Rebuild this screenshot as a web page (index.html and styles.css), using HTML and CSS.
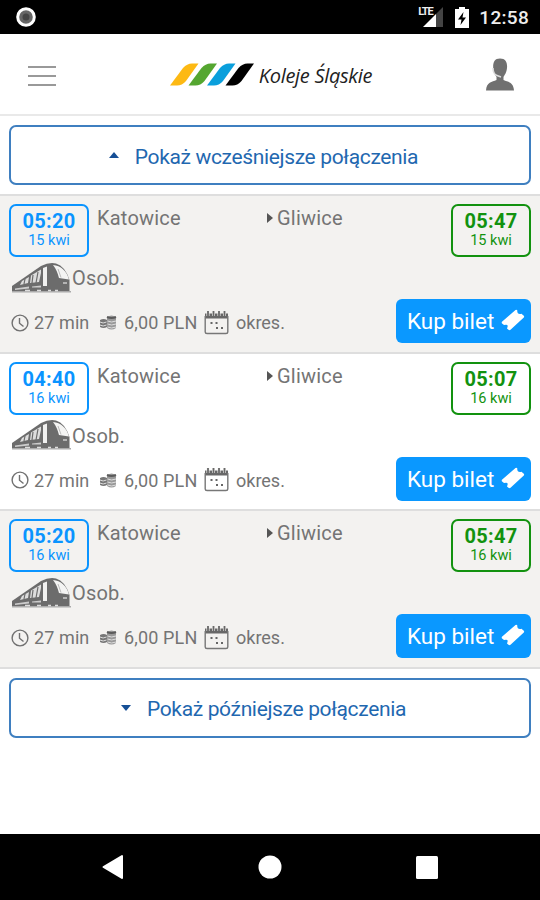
FILE: index.html
```html
<!DOCTYPE html>
<html lang="pl">
<head>
    <meta charset="UTF-8">
    <meta name="viewport" content="width=device-width, initial-scale=1.0">
    <title>Koleje Śląskie</title>
    <link rel="stylesheet" href="styles.css">
</head>
<body>
    <svg class="sprite">
        <symbol id="train" viewBox="0 0 59 31">
            <path d="M0 27 V23 L29 3 Q37 -1 44 .5 Q53 3 57.500 17 V28 H0Z" fill="#6c6c6c"/>
            <path d="M41 2 Q53 3 57 16.500 L47 15 Q45 7 41 2Z" fill="#f4f4f3"/>
            <path d="M31 5 L35 3.500 V23 H31Z" fill="#f1f1f0"/>
            <path d="M19 12.500 L29 6.500 V10 L27 19 L18 20Z M10 18 L17 14 L16 20 L8 22Z" fill="#ddd"/>
            <path d="M26 9 L24 20 M21 12 L20 20 M13 16 L12 21" stroke="#6c6c6c" stroke-width="1.200"/>
            <path d="M3 25.500 L17 23.500 V25.500 L3 27Z M20 23.500 L29 22.500 V24.500 H20Z" fill="#ccc"/>
            <path d="M46 6 L49 14.500" stroke="#bbb" fill="none"/>
            <path d="M51 20 h4" stroke="#ccc" stroke-width="1.500"/>
            <path d="M0 28.800 H59" stroke="#aaa" stroke-width="1.500"/>
            <path d="M13 27.500 h5 M25 27.500 h4 M36 27.500 h3 M43 27.500 h3" stroke="#ddd" stroke-width="1.500"/>
        </symbol>
        <symbol id="clock" viewBox="0 0 18 18">
            <circle cx="9" cy="9" r="7.900" fill="none" stroke="#707070" stroke-width="1.400"/>
            <path d="M8.500 4 V9.200 L12.500 12.500" fill="none" stroke="#707070" stroke-width="1.400"/>
        </symbol>
        <symbol id="coins" viewBox="0 0 18 15">
            <path d="M8 2 Q12.500 -1 17 2 V13 Q12.500 16 8 13Z" fill="#999"/>
            <path d="M1 5 Q4.500 3 8 5 V12 Q4.500 14 1 12Z" fill="#777"/>
            <path d="M8 2 Q12.500 4 17 2" stroke="#5b5b5b" stroke-width="2" fill="none"/>
            <path d="M8.500 6 Q12.500 8 17 6 M8.500 9 Q12.500 11 17 9 M8.500 12 Q12.500 14 17 12 M1 7 Q4 9 7.500 7 M1 10 Q4 12 7.500 10" stroke="#ddd" fill="none"/>
        </symbol>
        <symbol id="calendar" viewBox="0 0 25 24">
            <path d="M1 2.500 H24 V7.500 H1Z" fill="#686868"/>
            <path d="M1.200 5 V21 Q1.200 22.500 3 22.500 H22 Q23.800 22.500 23.800 21 V5" fill="none" stroke="#777" stroke-width="1.400"/>
            <path d="M4 0 V5 M9.500 0 V5 M15 0 V5 M20.500 0 V5" stroke="#f2f1ef" stroke-width="3"/>
            <path d="M4 0 V5 M9.500 0 V5 M15 0 V5 M20.500 0 V5" stroke="#686868" stroke-width="1.800"/>
            <path d="M6.500 12 h2 M11.500 12 h2 M12 17 h2 M17 17 h2" stroke="#666" stroke-width="1.800"/>
        </symbol>
        <symbol id="ticket" viewBox="0 0 24 24">
            <path d="M.7 14 L14.500 2 Q15.500 1.200 16.300 2.200 Q15.800 6.800 20.500 5.800 L22.800 7.800 Q23.500 8.600 22.800 9.400 L9.500 21.700 Q8.500 22.500 7.500 21.800 L6 20.500 Q8.300 15.500 3 17 L.8 15.300Z" fill="#fff"/>
        </symbol>
    </svg>

    <div class="status-bar">
        <svg class="record" viewBox="0 0 20 20">
            <circle cx="10" cy="10" r="8.300" fill="#666" stroke="#fff" stroke-width="3"/>
            <circle cx="10" cy="10" r="3.500" fill="#444"/>
        </svg>
        <div class="signal">
            <span class="lte">LTE</span>
            <svg width="20" height="20" viewBox="0 0 20 20">
                <path d="M20 0 V20 H13 V7Z" fill="#444"/>
                <path d="M13 7 V20 H0Z" fill="#fff"/>
            </svg>
        </div>
        <svg class="battery" viewBox="0 0 14 21">
            <path d="M4 0 H10 V2 H14 V21 H0 V2 H4Z" fill="#fff"/>
            <path d="M8.500 5 L3 12.500 H6.500 L5.500 18 L11 10.500 H7.500Z" fill="#000"/>
        </svg>
        <span class="clock">12:58</span>
    </div>

    <header class="header">
        <div class="menu"><span></span><span></span><span></span></div>
        <div class="logo">
            <svg width="84" height="23" viewBox="0 0 84 23">
                <path d="M0 22.500 L13 5 Q17 .5 22 .5 H28.500 L16 18 Q12 22.500 7 22.500Z" fill="#fdb913"/>
                <path d="M18.500 22.500 L31.500 5 Q35.500 .5 40.500 .5 H47 L34.500 18 Q30.500 22.500 25.500 22.500Z" fill="#55a630"/>
                <path d="M37 22.500 L50 5 Q54 .5 59 .5 H65.500 L53 18 Q49 22.500 44 22.500Z" fill="#0a9fdc"/>
                <path d="M55.500 22.500 L68.500 5 Q72.500 .5 77.500 .5 H84 L71.500 18 Q67.500 22.500 62.500 22.500Z" fill="#000"/>
            </svg>
            <span>Koleje Śląskie</span>
        </div>
        <svg class="user" viewBox="0 0 28 33">
            <path d="M14 .5 C20 .5 21.500 5 21 10 C20.500 15 18.500 17 17.500 19 V22 C22 24 27.500 24 28 32.500 H0 C.5 24 6 24 10.500 22 V19 C9 17 7.500 14 7.200 10 C7 4 8.500 .5 14 .5Z" fill="#707070"/>
            <path d="M7 10 Q7 16 11 17.500 L15 19" fill="none" stroke="#ddd" stroke-width="1.500"/>
        </svg>
    </header>

    <main>
        <button class="load-more earlier"><svg width="10" height="6"><path d="M0 6 L5 0 L10 6Z"/></svg><span>Pokaż wcześniejsze połączenia</span></button>

        <div class="connection">
            <div class="route">
                <div class="time departure"><b>05:20</b><span>15 kwi</span></div>
                <div class="station from">Katowice</div>
                <svg class="arrow" width="6" height="10"><path d="M0 0 L6 5 L0 10Z"/></svg>
                <div class="station">Gliwice</div>
                <div class="time arrival"><b>05:47</b><span>15 kwi</span></div>
            </div>
            <div class="train"><svg><use href="#train"/></svg>Osob.</div>
            <div class="info">
                <svg class="icon-clock"><use href="#clock"/></svg><span class="duration">27 min</span>
                <svg class="icon-coins"><use href="#coins"/></svg><span class="price">6,00 PLN</span>
                <svg class="icon-calendar"><use href="#calendar"/></svg><span class="period">okres.</span>
                <button class="buy">Kup bilet<svg><use href="#ticket"/></svg></button>
            </div>
        </div>

        <div class="connection">
            <div class="route">
                <div class="time departure"><b>04:40</b><span>16 kwi</span></div>
                <div class="station from">Katowice</div>
                <svg class="arrow" width="6" height="10"><path d="M0 0 L6 5 L0 10Z"/></svg>
                <div class="station">Gliwice</div>
                <div class="time arrival"><b>05:07</b><span>16 kwi</span></div>
            </div>
            <div class="train"><svg><use href="#train"/></svg>Osob.</div>
            <div class="info">
                <svg class="icon-clock"><use href="#clock"/></svg><span class="duration">27 min</span>
                <svg class="icon-coins"><use href="#coins"/></svg><span class="price">6,00 PLN</span>
                <svg class="icon-calendar"><use href="#calendar"/></svg><span class="period">okres.</span>
                <button class="buy">Kup bilet<svg><use href="#ticket"/></svg></button>
            </div>
        </div>

        <div class="connection">
            <div class="route">
                <div class="time departure"><b>05:20</b><span>16 kwi</span></div>
                <div class="station from">Katowice</div>
                <svg class="arrow" width="6" height="10"><path d="M0 0 L6 5 L0 10Z"/></svg>
                <div class="station">Gliwice</div>
                <div class="time arrival"><b>05:47</b><span>16 kwi</span></div>
            </div>
            <div class="train"><svg><use href="#train"/></svg>Osob.</div>
            <div class="info">
                <svg class="icon-clock"><use href="#clock"/></svg><span class="duration">27 min</span>
                <svg class="icon-coins"><use href="#coins"/></svg><span class="price">6,00 PLN</span>
                <svg class="icon-calendar"><use href="#calendar"/></svg><span class="period">okres.</span>
                <button class="buy">Kup bilet<svg><use href="#ticket"/></svg></button>
            </div>
        </div>

        <button class="load-more later"><svg width="10" height="6"><path d="M0 0 L5 6 L10 0Z"/></svg><span>Pokaż późniejsze połączenia</span></button>
    </main>

    <nav class="nav-bar">
        <svg width="22" height="26" viewBox="0 0 22 26"><path d="M1.500 13 L20 2 V24Z" fill="#fff" stroke="#fff" stroke-width="2" stroke-linejoin="round"/></svg>
        <svg width="24" height="24"><circle cx="12" cy="12" r="11.500" fill="#fff"/></svg>
        <svg width="22" height="23"><rect width="22" height="23" rx="1.500" fill="#fff"/></svg>
    </nav>
</body>
</html>
```

FILE: styles.css
```css
:root {
    --blue: #0a94ff;
    --dark-blue: #1f68b0;
    --green: #12920f;
    --grey: #747474;
    --line: #dedede;
}

* {
    box-sizing: border-box;
    margin: 0;
    padding: 0;
}

body {
    width: 540px;
    height: 900px;
    display: flex;
    flex-direction: column;
    background: #fff;
    color: var(--grey);
    font-family: Roboto, sans-serif;
    overflow: hidden;
}

svg {
    display: block;
    flex: none;
}

button {
    font-family: inherit;
}

.sprite {
    display: none;
}

.status-bar {
    flex: none;
    height: 34px;
    padding: 0 11px 0 16px;
    display: flex;
    align-items: center;
    background: #000;
    color: #eee;
}

.record {
    width: 20px;
    height: 20px;
}

.signal {
    position: relative;
    margin-left: auto;
    margin-right: 12px;
}

.lte {
    position: absolute;
    left: -5px;
    top: -1px;
    font-size: 11px;
    font-weight: bold;
    line-height: 11px;
    letter-spacing: -1.2px;
}

.battery {
    width: 14px;
    height: 21px;
    margin-right: 10px;
}

.clock {
    font-size: 19px;
    font-weight: 500;
    letter-spacing: 0.3px;
    line-height: 34px;
    padding-top: 2px;
}

.header {
    flex: none;
    height: 82px;
    padding: 0 26px 0 28px;
    display: flex;
    align-items: center;
    justify-content: space-between;
    border-bottom: 2px solid #e9e9e9;
}

.menu {
    width: 28px;
    display: flex;
    flex-direction: column;
    gap: 7px;
    padding-top: 3px;
}

.menu span {
    height: 2px;
    background: #999;
}

.logo {
    display: flex;
    align-items: center;
    gap: 5px;
}

.logo span {
    padding-top: 2px;
    font-family: "Open Sans", sans-serif;
    font-style: italic;
    font-size: 20px;
    letter-spacing: -0.3px;
    color: #222;
}

.user {
    width: 28px;
    height: 33px;
}

main {
    flex: 1;
    padding-top: 9px;
}

.load-more {
    display: flex;
    align-items: center;
    justify-content: center;
    gap: 16px;
    width: 522px;
    height: 60px;
    margin-left: 9px;
    padding-right: 13px;
    border: 2px solid #3f7fc0;
    border-radius: 7px;
    background: #fff;
    color: var(--dark-blue);
    font-size: 21px;
    letter-spacing: -0.35px;
}

.load-more span {
    padding-top: 3px;
}

.load-more svg {
    fill: #164f96;
}

.earlier {
    margin-bottom: 9px;
}

.later {
    margin-top: 9px;
}

.connection {
    height: 157.5px;
    padding: 8px 9px 0;
    border-top: 2px solid var(--line);
}

.connection:nth-of-type(odd) {
    background: #f3f2f0;
}

.connection:last-of-type {
    height: 159.5px;
    border-bottom: 2px solid var(--line);
}

.route {
    display: flex;
    height: 53px;
}

.time {
    width: 80px;
    height: 53px;
    padding-top: 3px;
    border: 2px solid currentColor;
    border-radius: 7px;
    text-align: center;
}

.time b {
    display: block;
    font-size: 20px;
    line-height: 24px;
    letter-spacing: 0.3px;
}

.time span {
    display: block;
    font-size: 14.5px;
    line-height: 16px;
}

.departure {
    color: var(--blue);
}

.arrival {
    color: var(--green);
    margin-left: auto;
}

.station {
    font-size: 20px;
    line-height: 29px;
    letter-spacing: 0.2px;
}

.from {
    width: 170px;
    margin-left: 8px;
}

.arrow {
    margin: 9px 4px 0 0;
    fill: #555;
}

.train {
    display: flex;
    align-items: center;
    height: 30px;
    margin-top: 6px;
    padding-left: 3px;
    gap: 1px;
    font-size: 20px;
    letter-spacing: 0.2px;
}

.train svg {
    width: 59px;
    height: 31px;
}

.info {
    display: flex;
    align-items: center;
    height: 44px;
    margin-top: 6px;
    padding-left: 2px;
    font-size: 18px;
}

.info svg,
.info span {
    margin-top: 3px;
}

.icon-clock {
    width: 18px;
    height: 18px;
    margin-right: 5px;
}

.duration {
    width: 65px;
    letter-spacing: 0.1px;
}

.icon-coins {
    width: 18px;
    height: 15px;
    margin-right: 7px;
}

.price {
    width: 80px;
    letter-spacing: 0.15px;
}

.icon-calendar {
    width: 25px;
    height: 24px;
    margin-right: 7px;
}

.buy {
    display: flex;
    align-items: center;
    justify-content: space-between;
    width: 135px;
    height: 44px;
    margin-left: auto;
    padding: 0 6px 0 11px;
    border: none;
    border-radius: 6px;
    background: #0a98ff;
    color: #fff;
    font-size: 22.5px;
}

.info .buy svg {
    width: 24px;
    height: 24px;
    margin-top: -2px;
}

.nav-bar {
    flex: none;
    display: flex;
    align-items: center;
    justify-content: space-between;
    height: 66px;
    padding: 0 102px;
    background: #000;
}
```
